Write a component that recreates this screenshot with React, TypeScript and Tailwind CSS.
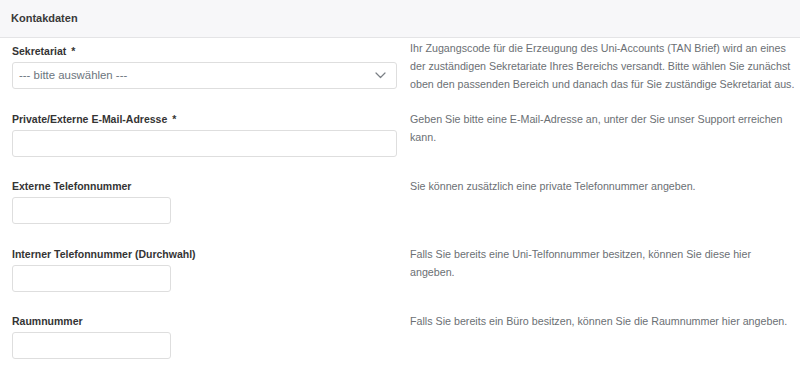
import React from "react";

const font = { fontFamily: '"Liberation Sans", Arial, sans-serif' };

function Row({
  label,
  required,
  help,
  wide,
  select,
  helpOffset = 0,
}: {
  label: string;
  required?: boolean;
  help: string[];
  wide?: boolean;
  select?: boolean;
  helpOffset?: number;
}) {
  return (
    <div className="flex h-[67.5px]">
      <div className="w-[385px] shrink-0">
        <div className="h-[18px] text-[10.5px] leading-[18px] font-bold text-[#343434]">
          {label}
          {required && <span className="ml-[5px]">*</span>}
        </div>
        {select ? (
          <div className="mt-[2px] flex h-[27px] w-full items-center justify-between rounded-[3px] border border-[#dedede] bg-white pl-[6px] pr-[10px]">
            <span className="text-[11.4px] text-[#6c757d]">--- bitte auswählen ---</span>
            <svg width="11" height="7" viewBox="0 0 11 7" fill="none">
              <path d="M1 1l4.5 4.5L10 1" stroke="#7a7f85" strokeWidth="1.2" strokeLinecap="round" strokeLinejoin="round" />
            </svg>
          </div>
        ) : (
          <div
            className={
              "mt-[2px] h-[27px] rounded-[3px] border border-[#dedede] bg-white " +
              (wide ? "w-full" : "w-[159px]")
            }
          />
        )}
      </div>
      <div
        className="ml-[13px] text-[10.7px] leading-[18px] text-[#6b6f74]"
        style={{ marginTop: helpOffset }}
      >
        {help.map((l, i) => (
          <div key={i} className="whitespace-nowrap">
            {l}
          </div>
        ))}
      </div>
    </div>
  );
}

export default function App() {
  return (
    <div className="h-[375px] w-[800px] overflow-hidden bg-white" style={font}>
      <div className="flex h-[38px] items-center border-b border-[#e4e4e6] bg-[#f7f7f9] px-[11px] text-[11px] font-semibold text-[#3a3a3a]">
        Kontakdaten
      </div>
      <div className="px-[12px] pt-[4px]">
        <Row
          label="Sekretariat"
          required
          select
          helpOffset={-3}
          help={[
            "Ihr Zugangscode für die Erzeugung des Uni-Accounts (TAN Brief) wird an eines",
            "der zuständigen Sekretariate Ihres Bereichs versandt. Bitte wählen Sie zunächst",
            "oben den passenden Bereich und danach das für Sie zuständige Sekretariat aus.",
          ]}
        />
        <Row
          label="Private/Externe E-Mail-Adresse"
          required
          wide
          help={[
            "Geben Sie bitte eine E-Mail-Adresse an, unter der Sie unser Support erreichen",
            "kann.",
          ]}
        />
        <Row
          label="Externe Telefonnummer"
          help={["Sie können zusätzlich eine private Telefonnummer angeben."]}
        />
        <Row
          label="Interner Telefonnummer (Durchwahl)"
          help={[
            "Falls Sie bereits eine Uni-Telfonnummer besitzen, können Sie diese hier",
            "angeben.",
          ]}
        />
        <Row
          label="Raumnummer"
          help={["Falls Sie bereits ein Büro besitzen, können Sie die Raumnummer hier angeben."]}
        />
      </div>
    </div>
  );
}
